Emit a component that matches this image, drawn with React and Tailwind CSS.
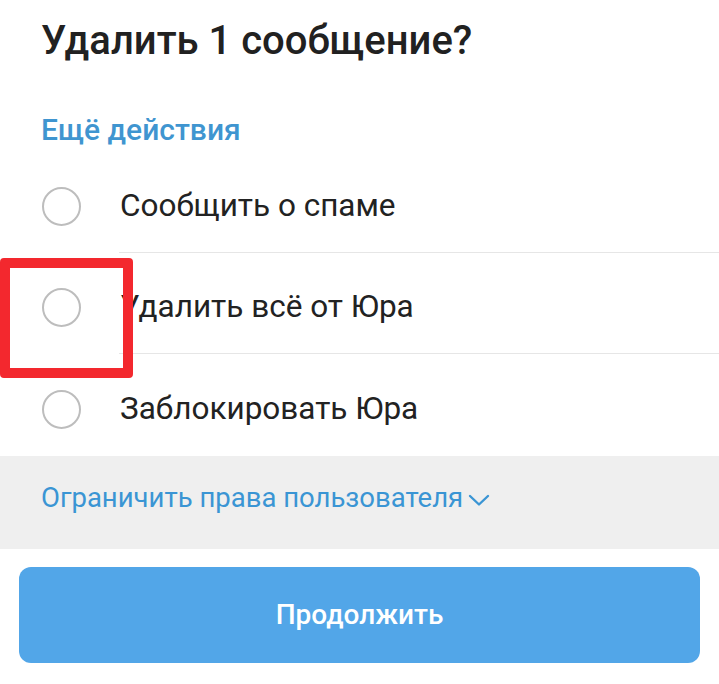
const options = ['Сообщить о спаме', 'Удалить всё от Юра', 'Заблокировать Юра'];

function Radio() {
  return <span className="block h-[39px] w-[39px] rounded-full border-[2.5px] border-[#bdbdbd]" />;
}

export default function App() {
  return (
    <div
      className="relative h-[684px] w-[719px] overflow-hidden bg-white text-[#212121]"
      style={{ fontFamily: 'Roboto, "Noto Sans", sans-serif' }}
    >
      <div className="pl-[41px] pt-[17px]">
        <h1 className="text-[40px] font-medium leading-[48px]">Удалить 1 сообщение?</h1>
        <p className="mt-[47px] text-[30px] font-medium leading-[36px] text-[#3f95d0]">Ещё действия</p>
      </div>

      <div className="mt-[4px]">
        {options.map((label, i) => {
          const last = i === options.length - 1;
          return (
            <label key={label} className={`flex pl-[42px] ${last ? 'h-[102px]' : 'h-[101px]'}`}>
              <div className="flex items-center pt-2">
                <Radio />
              </div>
              <div
                className={`ml-[38px] flex flex-1 items-center pl-px pt-2 text-[31.5px] leading-[36px] text-[#222] ${
                  last ? '' : 'border-b border-[#e6e6e6]'
                }`}
              >
                {label}
              </div>
            </label>
          );
        })}
      </div>

      <div className="h-[93px] bg-[#efefef] pl-[41px] pt-[26px]">
        <div className="flex items-center text-[27.5px] leading-[32px] text-[#3a95d4]">
          <span>Ограничить права пользователя</span>
          <svg className="ml-[5px] mt-[4px]" width="22" height="13" viewBox="0 0 22 13" fill="none">
            <polyline points="2,2 11,10.5 20,2" stroke="#3a95d4" strokeWidth="2.4" strokeLinecap="round" strokeLinejoin="round" />
          </svg>
        </div>
      </div>

      <div className="mx-[19px] mt-[18px]">
        <button className="flex h-[96px] w-full items-center justify-center rounded-[12px] bg-[#52a6e8] text-[28px] font-medium text-white">
          Продолжить
        </button>
      </div>

      <div className="absolute left-0 top-[258px] h-[120px] w-[133px] rounded-[4px] border-[10px] border-[#f3282e]" />
    </div>
  );
}
